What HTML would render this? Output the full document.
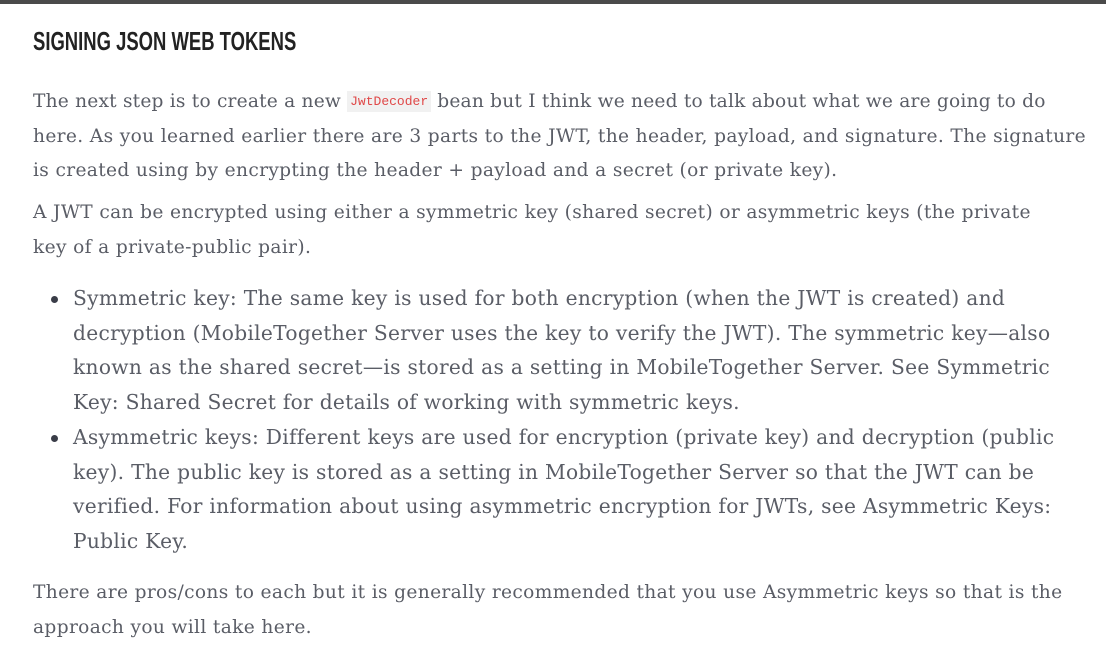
<!DOCTYPE html>
<html><head><meta charset="utf-8"><style>
html,body{margin:0;padding:0;width:1106px;height:640px;overflow:hidden;background:#fff}
.bar{position:absolute;left:0;top:0;width:1106px;height:4px;background:#4a4a4a}
h2{position:absolute;left:33px;top:26px;margin:0;font-family:"Liberation Sans",sans-serif;font-weight:bold;font-size:26px;color:#222;transform:scaleX(0.71);transform-origin:0 0;white-space:nowrap}
.t{position:absolute;left:33px;font-family:"DejaVu Serif",serif;font-size:18.6px;letter-spacing:0.35px;color:#5a5d66;white-space:nowrap;line-height:34.5px}
.li{left:73px;font-size:20.2px;letter-spacing:0.3px}
.dot{position:absolute;left:51px;width:7px;height:7px;border-radius:50%;background:#3a3d48}
code{font-family:"Liberation Mono",monospace;font-size:13px;letter-spacing:0;color:#e04848;background:#f1f1f1;padding:3px 3px;vertical-align:2px}
</style></head><body>
<div class="bar"></div>
<h2>SIGNING JSON WEB TOKENS</h2>
<div class="t" style="top:85px;letter-spacing:0.2px">The next step is to create a new <code>JwtDecoder</code> bean but I think we need to talk about what we are going to do</div>
<div class="t" style="top:119.5px">here. As you learned earlier there are 3 parts to the JWT, the header, payload, and signature. The signature<br>is created using by encrypting the header + payload and a secret (or private key).</div>
<div class="t" style="top:196px">A JWT can be encrypted using either a symmetric key (shared secret) or asymmetric keys (the private<br>key of a private-public pair).</div>
<div class="dot" style="top:296px"></div>
<div class="t li" style="top:281px">Symmetric key: The same key is used for both encryption (when the JWT is created) and<br>decryption (MobileTogether Server uses the key to verify the JWT). The symmetric key—also<br>known as the shared secret—is stored as a setting in MobileTogether Server. See Symmetric<br>Key: Shared Secret for details of working with symmetric keys.</div>
<div class="dot" style="top:435px"></div>
<div class="t li" style="top:420px">Asymmetric keys: Different keys are used for encryption (private key) and decryption (public<br>key). The public key is stored as a setting in MobileTogether Server so that the JWT can be<br>verified. For information about using asymmetric encryption for JWTs, see Asymmetric Keys:<br>Public Key.</div>
<div class="t" style="top:576px">There are pros/cons to each but it is generally recommended that you use Asymmetric keys so that is the<br>approach you will take here.</div>
</body></html>
